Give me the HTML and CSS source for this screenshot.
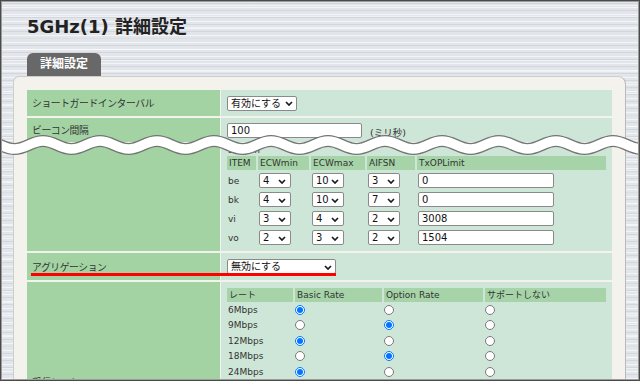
FILE: index.html
```html
<!DOCTYPE html>
<html>
<head>
    <meta charset="utf-8">
    <title>5GHz(1) 詳細設定</title>
    <link rel="stylesheet" href="styles.css">
</head>
<body>
<div class="screen">
    <h1 class="page-title">5GHz(1) 詳細設定</h1>
    <div class="tab">詳細設定</div>

    <div class="panel">
        <div class="settings">
            <!-- short guard interval -->
            <div class="label">ショートガードインターバル</div>
            <div class="value center">
                <span class="select w-guard"><select><option>有効にする</option></select><svg class="chev" viewBox="0 0 8 5"><path d="M1 1l3 3 3-3"/></svg></span>
            </div>

            <!-- beacon interval -->
            <div class="label">ビーコン間隔</div>
            <div class="value top">
                <input type="text" class="text w-beacon" value="100">
                <span class="unit">(ミリ秒)</span>
            </div>

            <!-- EDCA -->
            <div class="label"></div>
            <div class="value">
                <div class="caption">Station</div>
                <div class="edca">
                    <div class="head">ITEM</div>
                    <div class="head">ECWmin</div>
                    <div class="head">ECWmax</div>
                    <div class="head">AIFSN</div>
                    <div class="head">TxOPLimit</div>

                    <div class="cell">be</div>
                    <div class="cell"><span class="select w-ecw"><select><option>4</option></select><svg class="chev" viewBox="0 0 8 5"><path d="M1 1l3 3 3-3"/></svg></span></div>
                    <div class="cell"><span class="select w-ecw"><select><option>10</option></select><svg class="chev" viewBox="0 0 8 5"><path d="M1 1l3 3 3-3"/></svg></span></div>
                    <div class="cell"><span class="select w-ecw"><select><option>3</option></select><svg class="chev" viewBox="0 0 8 5"><path d="M1 1l3 3 3-3"/></svg></span></div>
                    <div class="cell"><input type="text" class="text w-txop" value="0"></div>

                    <div class="cell">bk</div>
                    <div class="cell"><span class="select w-ecw"><select><option>4</option></select><svg class="chev" viewBox="0 0 8 5"><path d="M1 1l3 3 3-3"/></svg></span></div>
                    <div class="cell"><span class="select w-ecw"><select><option>10</option></select><svg class="chev" viewBox="0 0 8 5"><path d="M1 1l3 3 3-3"/></svg></span></div>
                    <div class="cell"><span class="select w-ecw"><select><option>7</option></select><svg class="chev" viewBox="0 0 8 5"><path d="M1 1l3 3 3-3"/></svg></span></div>
                    <div class="cell"><input type="text" class="text w-txop" value="0"></div>

                    <div class="cell">vi</div>
                    <div class="cell"><span class="select w-ecw"><select><option>3</option></select><svg class="chev" viewBox="0 0 8 5"><path d="M1 1l3 3 3-3"/></svg></span></div>
                    <div class="cell"><span class="select w-ecw"><select><option>4</option></select><svg class="chev" viewBox="0 0 8 5"><path d="M1 1l3 3 3-3"/></svg></span></div>
                    <div class="cell"><span class="select w-ecw"><select><option>2</option></select><svg class="chev" viewBox="0 0 8 5"><path d="M1 1l3 3 3-3"/></svg></span></div>
                    <div class="cell"><input type="text" class="text w-txop" value="3008"></div>

                    <div class="cell">vo</div>
                    <div class="cell"><span class="select w-ecw"><select><option>2</option></select><svg class="chev" viewBox="0 0 8 5"><path d="M1 1l3 3 3-3"/></svg></span></div>
                    <div class="cell"><span class="select w-ecw"><select><option>3</option></select><svg class="chev" viewBox="0 0 8 5"><path d="M1 1l3 3 3-3"/></svg></span></div>
                    <div class="cell"><span class="select w-ecw"><select><option>2</option></select><svg class="chev" viewBox="0 0 8 5"><path d="M1 1l3 3 3-3"/></svg></span></div>
                    <div class="cell"><input type="text" class="text w-txop" value="1504"></div>
                </div>
            </div>

            <!-- aggregation -->
            <div class="label">アグリゲーション</div>
            <div class="value center">
                <span class="select w-agg"><select><option>無効にする</option></select><svg class="chev" viewBox="0 0 8 5"><path d="M1 1l3 3 3-3"/></svg></span>
            </div>

            <!-- receive rate -->
            <div class="label">受信レート</div>
            <div class="value rates-wrap">
                <div class="rates">
                    <div class="head">レート</div>
                    <div class="head">Basic Rate</div>
                    <div class="head">Option Rate</div>
                    <div class="head">サポートしない</div>

                    <div class="cell">6Mbps</div>
                    <div class="cell"><input type="radio" name="r6" checked></div>
                    <div class="cell"><input type="radio" name="r6"></div>
                    <div class="cell"><input type="radio" name="r6"></div>

                    <div class="cell">9Mbps</div>
                    <div class="cell"><input type="radio" name="r9"></div>
                    <div class="cell"><input type="radio" name="r9" checked></div>
                    <div class="cell"><input type="radio" name="r9"></div>

                    <div class="cell">12Mbps</div>
                    <div class="cell"><input type="radio" name="r12" checked></div>
                    <div class="cell"><input type="radio" name="r12"></div>
                    <div class="cell"><input type="radio" name="r12"></div>

                    <div class="cell">18Mbps</div>
                    <div class="cell"><input type="radio" name="r18"></div>
                    <div class="cell"><input type="radio" name="r18" checked></div>
                    <div class="cell"><input type="radio" name="r18"></div>

                    <div class="cell">24Mbps</div>
                    <div class="cell"><input type="radio" name="r24" checked></div>
                    <div class="cell"><input type="radio" name="r24"></div>
                    <div class="cell"><input type="radio" name="r24"></div>
                </div>
            </div>
        </div>
    </div>

    <!-- red marker under aggregation -->
    <div class="marker"></div>

    <!-- page break wave -->
    <svg class="wave" viewBox="0 0 640 40">
        <defs>
            <path id="w" d="M-14,16 C-2.6,16 3.1,24 14.5,24 S31.6,16 43,16 S60.1,24 71.5,24 S88.6,16 100,16 S117.1,24 128.5,24 S145.6,16 157,16 S174.1,24 185.5,24 S202.6,16 214,16 S231.1,24 242.5,24 S259.6,16 271,16 S288.1,24 299.5,24 S316.6,16 328,16 S345.1,24 356.5,24 S373.6,16 385,16 S402.1,24 413.5,24 S430.6,16 442,16 S459.1,24 470.5,24 S487.6,16 499,16 S516.1,24 527.5,24 S544.6,16 556,16 S573.1,24 584.5,24 S601.6,16 613,16 S630.1,24 641.5,24 S658.6,16 670,16"/>
        </defs>
        <use href="#w" class="wave-out"/>
        <use href="#w" class="wave-in"/>
    </svg>
</div>
</body>
</html>
```

FILE: styles.css
```css
body {
    margin: 0;
    font-family: "DejaVu Sans", "Noto Sans CJK JP", sans-serif;
    color: #333;
}

/* whole window, brushed metal background */
.screen {
    position: relative;
    width: 640px;
    height: 381px;
    overflow: hidden;
    box-sizing: border-box;
    padding: 0 14px 0 13px;
    background-color: #e2e5ea;
    background-image:
        repeating-linear-gradient(180deg, rgba(255,255,255,0.6) 0 1px, transparent 1px 3px, rgba(180,186,198,0.35) 3px 4px, transparent 4px 7px),
        repeating-linear-gradient(180deg, transparent 0 5px, rgba(255,255,255,0.45) 5px 6px, transparent 6px 11px);
}

.screen::after {
    content: "";
    position: absolute;
    inset: 0;
    box-shadow: inset 0 0 0 1px #4a4a4a, inset 0 0 0 2px #9c9c9c;
    pointer-events: none;
}

.page-title {
    margin: 0;
    padding: 15px 0 0 14px;
    font-size: 18px;
    line-height: 24px;
    font-weight: bold;
    color: #222;
}

.tab {
    width: 74px;
    height: 23px;
    margin: 14px 0 0 14px;
    background-color: #686868;
    border-radius: 6px 6px 0 0;
    color: #fff;
    font-size: 12px;
    font-weight: bold;
    line-height: 23px;
    text-align: center;
}

.panel {
    width: 613px;
    height: 420px;
    box-sizing: border-box;
    padding: 13px 13px 0 13px;
    background-color: #f3f2ec;
    border: 1px solid #cdcdcd;
    border-right-color: #b9b9b9;
    border-radius: 6px 8px 0 0;
}

/* main settings table */
.settings {
    display: grid;
    grid-template-columns: 193px 391px;
    grid-template-rows: 26px 24px 107px 27px 200px;
    column-gap: 1px;
    row-gap: 2px;
}

.label {
    display: flex;
    align-items: center;
    padding-left: 5px;
    background-color: #a3d3a3;
    font-size: 9.8px;
    letter-spacing: -0.4px;
    color: #333;
}

.value {
    padding-left: 6px;
    background-color: #cee6d7;
    font-size: 9px;
    color: #333;
}

.value.center {
    display: flex;
    align-items: center;
}

.value.top {
    display: flex;
    align-items: flex-start;
    padding-top: 5px;
    box-sizing: border-box;
}

.unit {
    margin: 2px 0 0 8px;
    font-size: 9.5px;
}

.caption {
    height: 12px;
    line-height: 12px;
    padding-left: 1px;
}

/* select boxes */
.select {
    position: relative;
    display: inline-block;
}

.select select {
    display: block;
    height: 15px;
    box-sizing: border-box;
    padding: 0 0 0 3px;
    margin: 0;
    border: 1px solid #8a8a8a;
    border-radius: 2px;
    background-color: #fff;
    color: #111;
    font-family: "DejaVu Sans", "Noto Sans CJK JP", sans-serif;
    font-size: 10px;
    line-height: 13px;
    appearance: none;
    -webkit-appearance: none;
}

.chev {
    position: absolute;
    top: 50%;
    right: 4px;
    width: 8px;
    height: 5px;
    margin-top: -2px;
    fill: none;
    stroke: #1b1b1b;
    stroke-width: 1.7;
    pointer-events: none;
}

.w-guard select { width: 70px; }
.w-agg select { width: 109px; }
.w-ecw select { width: 32px; }
.w-ecw .chev { right: 5px; }

.text {
    height: 15px;
    box-sizing: border-box;
    margin: 0;
    padding: 0 3px;
    border: 1px solid #8a8a8a;
    border-radius: 2px;
    background-color: #fff;
    color: #111;
    font-family: "DejaVu Sans", "Noto Sans CJK JP", sans-serif;
    font-size: 10px;
}

.w-beacon { width: 135px; }
.w-txop { width: 136px; }

/* EDCA parameter table */
.edca {
    display: grid;
    grid-template-columns: 29px 51px 54px 48px 189px;
    grid-template-rows: 15px repeat(4, 19px);
    column-gap: 2px;
}

.edca .head,
.rates .head {
    height: 14px;
    padding-left: 2px;
    background-color: #a6d4a8;
    line-height: 14px;
    white-space: nowrap;
}

.edca .head {
    align-self: start;
}

.cell {
    display: flex;
    align-items: center;
    padding-left: 1px;
}

/* receive rate table */
.rates-wrap {
    padding-top: 6px;
}

.rates {
    display: grid;
    grid-template-columns: 66px 87px 99px 121px;
    grid-template-rows: 14px;
    grid-auto-rows: 15.5px;
    column-gap: 2px;
}

.rates .cell {
    padding-left: 0;
}

.rates .cell:nth-child(4n+1) {
    padding-left: 1px;
}

.rates input[type=radio] {
    width: 10px;
    height: 10px;
    margin: 0;
}

.marker {
    position: absolute;
    left: 31px;
    top: 273px;
    width: 305px;
    height: 3px;
    background-color: #ff0000;
}

.wave {
    position: absolute;
    left: 0;
    top: 125px;
    width: 640px;
    height: 40px;
    overflow: visible;
    fill: none;
}

.wave-out {
    stroke: #747474;
    stroke-width: 12;
}

.wave-in {
    stroke: #fff;
    stroke-width: 9.6;
}
```
